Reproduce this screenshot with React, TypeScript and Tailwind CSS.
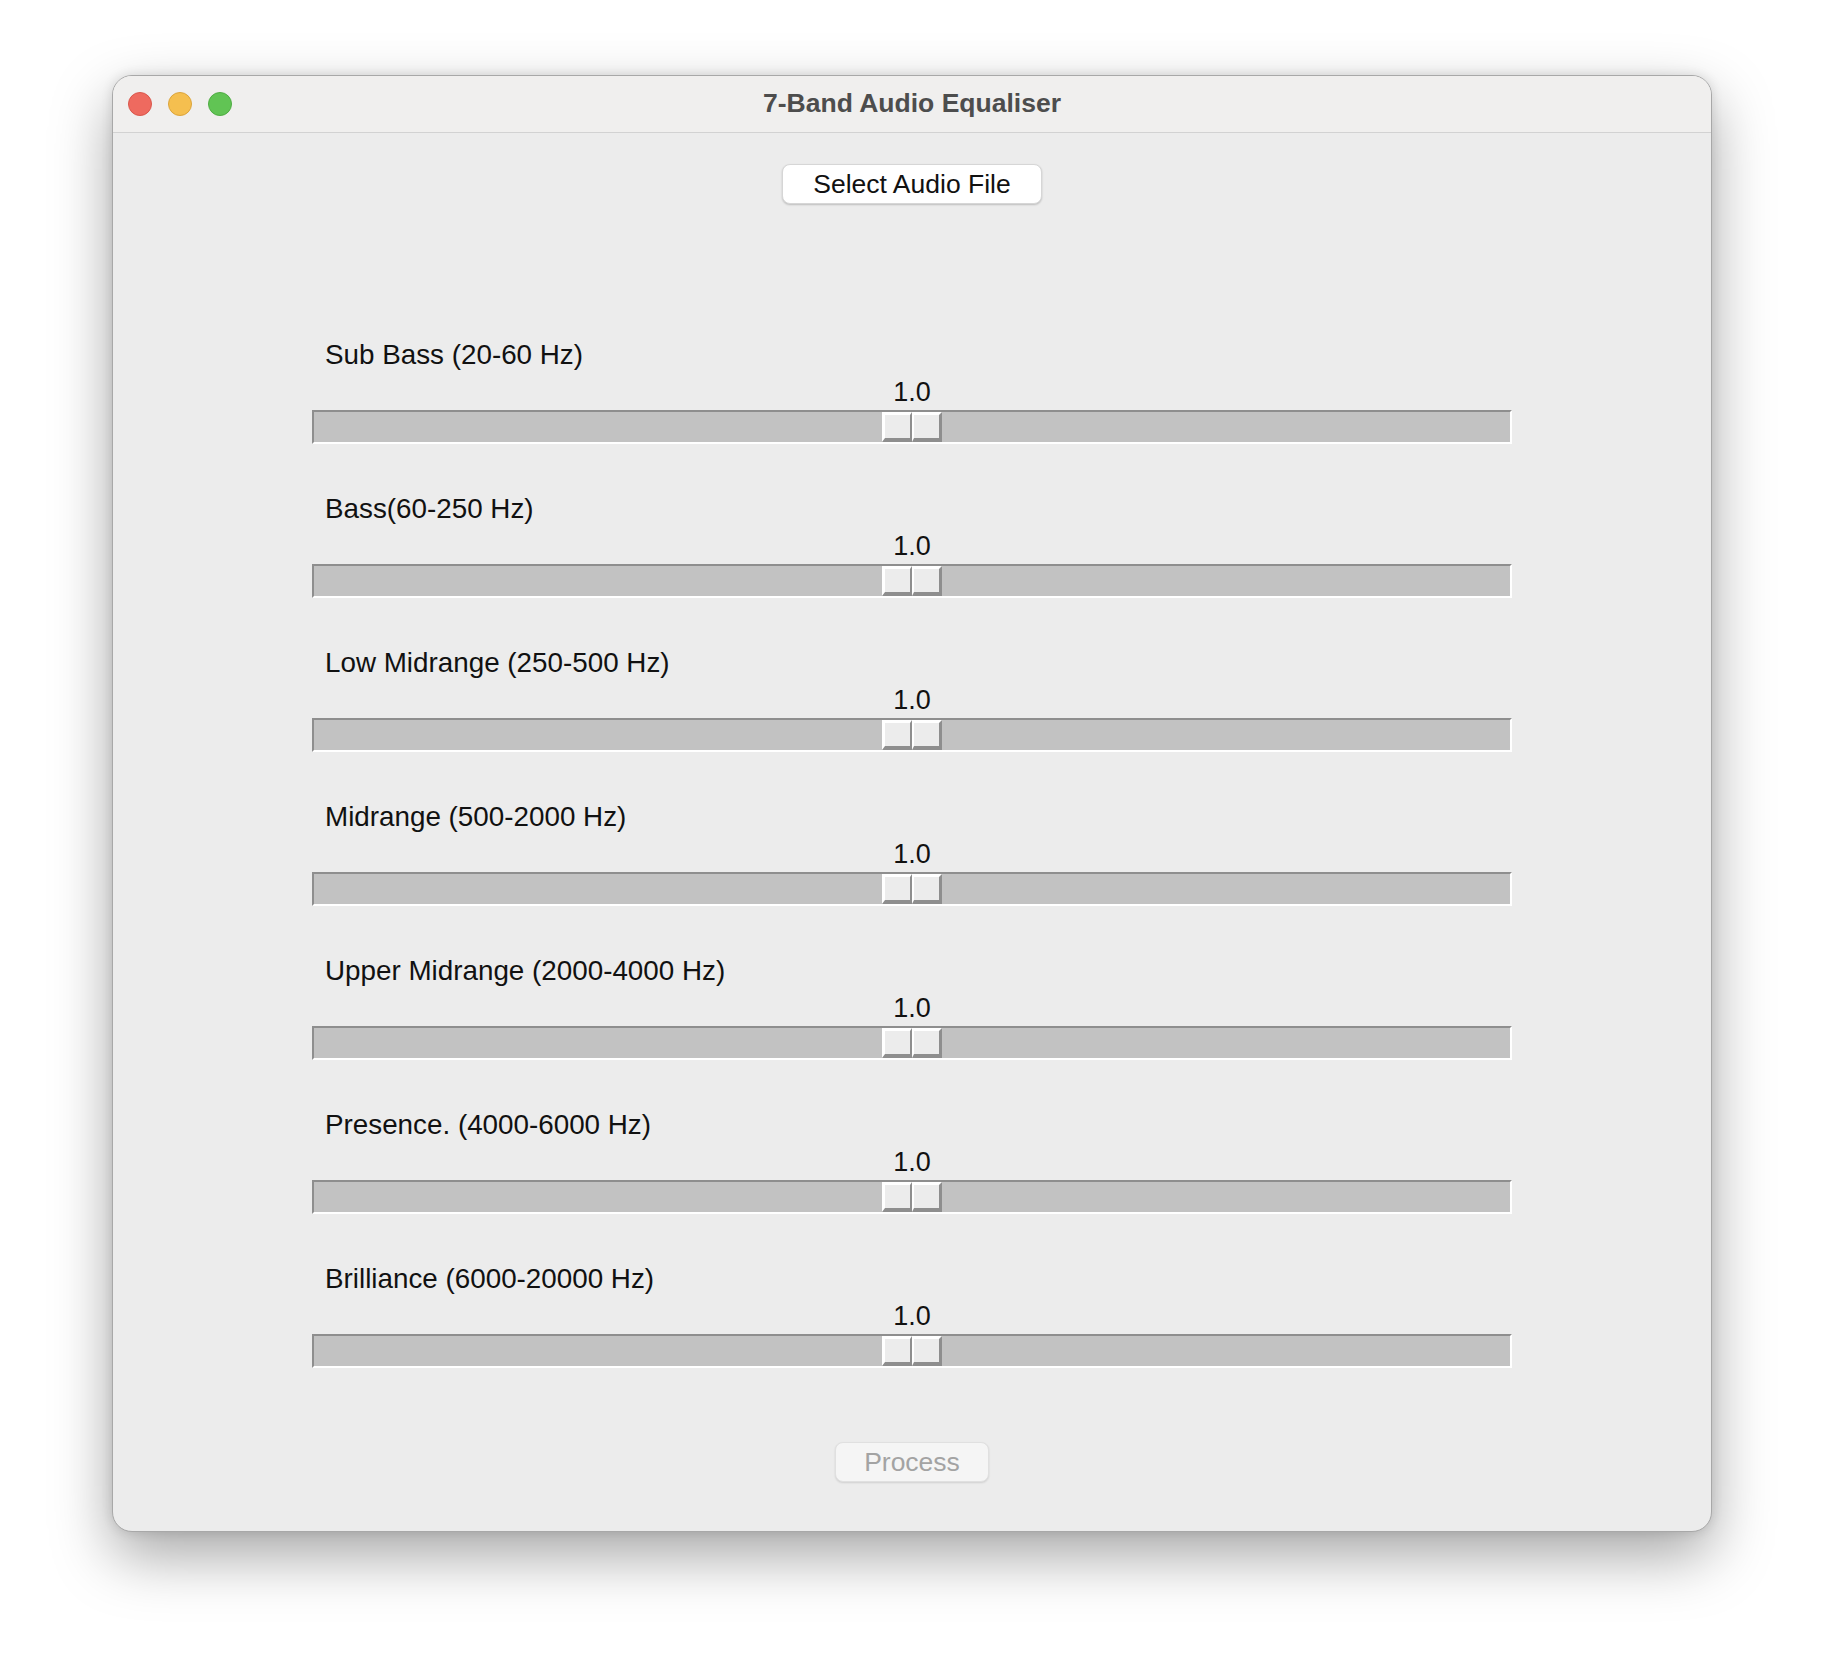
import React from 'react'

const bands = [
  'Sub Bass (20-60 Hz)',
  'Bass(60-250 Hz)',
  'Low Midrange (250-500 Hz)',
  'Midrange (500-2000 Hz)',
  'Upper Midrange (2000-4000 Hz)',
  'Presence. (4000-6000 Hz)',
  'Brilliance (6000-20000 Hz)',
]

function BandSlider({ label }: { label: string }) {
  return (
    <div className="flex flex-col">
      <div className="h-[30px] pl-[13px] text-[27.8px] leading-[30px] text-[#111]">{label}</div>
      <div className="mt-[7px] h-[30px] text-center text-[27px] leading-[30px] text-[#111]">1.0</div>
      <div className="mt-[3px] h-[34px] border-t-2 border-l-2 border-b-2 border-r-2 border-t-[#8e8e8e] border-l-[#8e8e8e] border-b-white border-r-white bg-[#c2c2c2]">
        <div className="flex h-full justify-center">
          <div className="flex h-[30px] w-[60px]">
            <div className="h-full w-[30px] border-t-[3px] border-l-[3px] border-b-[4px] border-r-2 border-t-white border-l-white border-b-[#8e8e8e] border-r-[#8e8e8e] bg-[#ececec]" />
            <div className="h-full w-[30px] border-t-[3px] border-l-2 border-b-[4px] border-r-[3px] border-t-white border-l-white border-b-[#8e8e8e] border-r-[#8e8e8e] bg-[#ececec]" />
          </div>
        </div>
      </div>
    </div>
  )
}

export default function App() {
  return (
    <div
      className="min-h-[1680px] w-[1824px] bg-white pt-[75px] pl-[112px]"
      style={{ fontFamily: '"Liberation Sans", Arial, sans-serif' }}
    >
      <div className="w-[1600px] overflow-hidden rounded-[20px] border border-[#a8a8a8] bg-[#ececec] shadow-[0_24px_60px_rgba(0,0,0,0.35),0_0_12px_rgba(0,0,0,0.12)]">
        {/* title bar */}
        <div className="relative flex h-[57px] items-center justify-center border-b border-[#d2d2d2] bg-[#f0efee]">
          <div className="absolute left-[15px] top-[16px] flex gap-[16px]">
            <span className="h-[24px] w-[24px] rounded-full border border-[#d9574c] bg-[#ee6a5f]" />
            <span className="h-[24px] w-[24px] rounded-full border border-[#dba43c] bg-[#f5bf4f]" />
            <span className="h-[24px] w-[24px] rounded-full border border-[#4fac43] bg-[#61c454]" />
          </div>
          <div className="text-[26.5px] font-bold text-[#4d4d4d]">7-Band Audio Equaliser</div>
        </div>

        {/* content */}
        <div className="flex flex-col items-center pb-[49px]">
          <button className="mt-[31px] h-[40px] w-[260px] rounded-[8px] border border-[#d6d6d6] bg-white text-[26.5px] text-[#111] shadow-[0_1px_2px_rgba(0,0,0,0.2)]">
            Select Audio File
          </button>

          <div className="mt-[136px] flex w-[1200px] flex-col gap-[50px]">
            {bands.map(b => (
              <BandSlider key={b} label={b} />
            ))}
          </div>

          <button className="mt-[74px] h-[40px] w-[154px] rounded-[8px] border border-[#e0e0e0] bg-[#f5f5f5] text-[26.5px] text-[#a3a3a3] shadow-[0_1px_2px_rgba(0,0,0,0.12)]">
            Process
          </button>
        </div>
      </div>
    </div>
  )
}
